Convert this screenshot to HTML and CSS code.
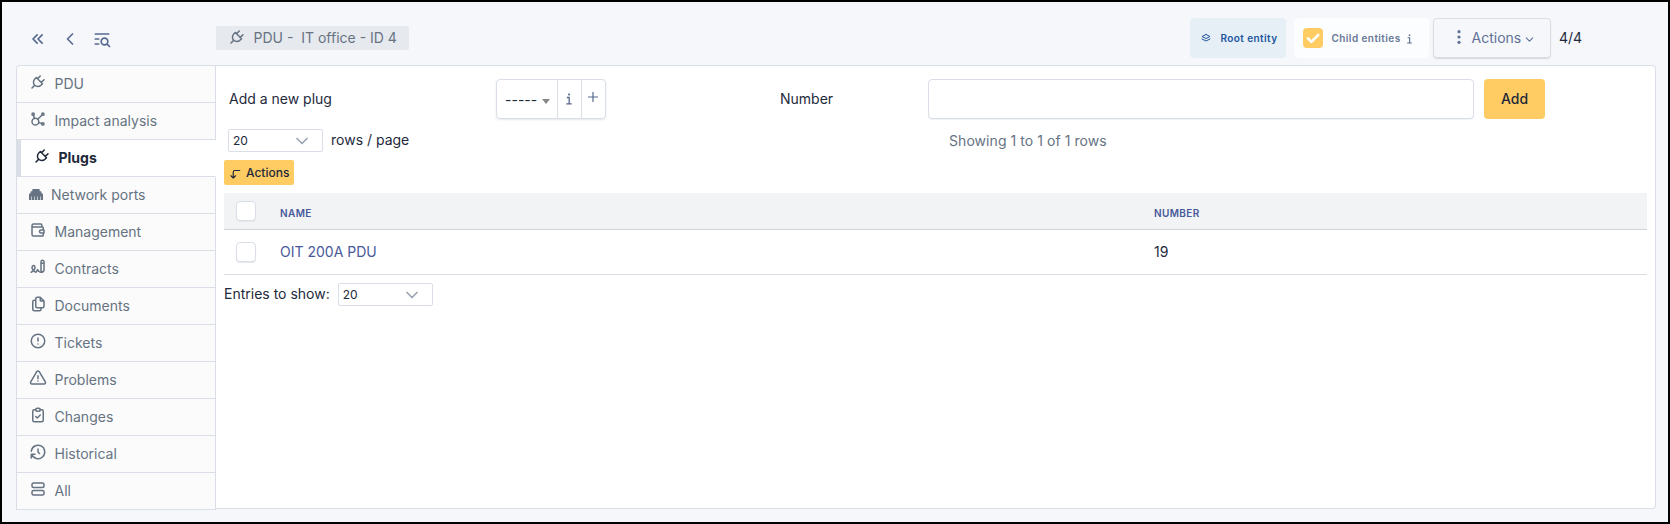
FILE: index.html
```html
<!DOCTYPE html>
<html lang="en">
<head>
<meta charset="utf-8">
<title>PDU - IT office - ID 4</title>
<link rel="stylesheet" href="styles.css">
</head>
<body>
<svg class="defs" width="0" height="0">
  <symbol id="plug" viewBox="0 0 24 24"><path d="M9.785 6l8.215 8.215l-2.054 2.054a5.81 5.81 0 1 1-8.215-8.215l2.054-2.054zM4 20l3.5-3.5M15 4l-3.5 3.5M20 9l-3.5 3.5"/></symbol>
  <symbol id="info" viewBox="0 0 6 12"><path d="M.8 4.5h2.4v6M.3 10.8h5.4" fill="none" stroke="currentColor" stroke-width="1.3"/><rect x="2.1" y=".6" width="1.8" height="1.8" fill="currentColor" stroke="none"/></symbol>
  <symbol id="down" viewBox="0 0 24 24"><path d="M6 9l6 6l6-6"/></symbol>
</svg>
<div class="page">
  <header class="topbar">
    <nav class="nav">
      <svg class="icon nav-icon"><path transform="scale(.8333)" d="M11 7l-5 5l5 5M17 7l-5 5l5 5"/></svg>
      <svg class="icon nav-icon"><path transform="scale(.8333)" d="M15 6l-6 6l6 6"/></svg>
      <svg class="icon nav-icon"><g transform="scale(.8333)"><circle cx="15" cy="15" r="4"/><path d="M18.5 18.5l2.5 2.5M4 6h16M4 12h4M4 18h4"/></g></svg>
    </nav>
    <h1 class="title"><svg class="icon"><use href="#plug"/></svg><span>PDU -&nbsp; IT office - ID 4</span></h1>
    <div class="tools">
      <div class="entity"><svg class="icon" viewBox="0 0 24 24"><path d="M12 5l-8 4l8 4l8-4l-8-4M4 14l8 4l8-4"/></svg><span>Root entity</span></div>
      <div class="children"><span class="checked"><svg viewBox="0 0 20 20"><path d="M5 10.5l3.4 3.3l6.8-6.8"/></svg></span><span>Child entities</span><svg class="info"><use href="#info"/></svg></div>
      <div class="menu"><svg class="dots" viewBox="0 0 4 14"><circle cx="2" cy="1.7" r="1.6"/><circle cx="2" cy="7" r="1.6"/><circle cx="2" cy="12.3" r="1.6"/></svg><span>Actions</span><svg class="icon caret"><use href="#down"/></svg></div>
      <span class="pager">4/4</span>
    </div>
  </header>
  <div class="body">
    <ul class="tabs">
      <li class="tab"><svg class="icon"><use href="#plug"/></svg><span>PDU</span></li>
      <li class="tab"><svg class="icon" viewBox="0 0 24 24"><path d="M5.931 6.936l1.275 4.249m5.607 5.609l4.251 1.275M11.683 12.317l5.759-5.759"/><circle cx="5.5" cy="5.5" r="1.5"/><circle cx="18.5" cy="5.5" r="1.5"/><circle cx="18.5" cy="18.5" r="1.5"/><circle cx="8.5" cy="15.5" r="4.5"/></svg><span>Impact analysis</span></li>
      <li class="tab active"><svg class="icon"><use href="#plug"/></svg><span>Plugs</span></li>
      <li class="tab ports"><svg class="solid" viewBox="0 0 14 11"><path d="M0 11V5.2Q0 4.6.6 4.6H1.5V2.8Q1.5 2.2 2.1 2.2H3.3V.6Q3.3 0 3.9 0H10.1Q10.7 0 10.7 .6V2.2H11.9Q12.5 2.2 12.5 2.8V4.6H13.4Q14 4.6 14 5.2V11H11.6V7.5H11V11H8.7V7.5H8.1V11H5.9V7.5H5.3V11H3V7.5H2.4V11z"/></svg><span>Network ports</span></li>
      <li class="tab"><svg class="icon" viewBox="0 0 24 24"><path d="M17 8v-3a1 1 0 0 0-1-1h-10a2 2 0 0 0 0 4h12a1 1 0 0 1 1 1v3m0 4v3a1 1 0 0 1-1 1h-12a2 2 0 0 1-2-2v-12M20 12v4h-4a2 2 0 0 1 0-4h4"/></svg><span>Management</span></li>
      <li class="tab"><svg class="icon" viewBox="0 0 24 24"><path d="M3 19c3.333-2 5-4 5-6c0-3-1-3-2-3s-2.032 1.085-2 3c.034 2.048 1.658 2.877 2.5 4c1.5 2 2.5 2.5 3.5 1c.667-1 1.167-1.833 1.5-2.5c1 2.333 2.333 3.5 4 3.5h2.5M20 17v-12c0-1.121-.879-2-2-2s-2 .879-2 2v12l2 2l2-2zM16 7h4"/></svg><span>Contracts</span></li>
      <li class="tab"><svg class="icon" viewBox="0 0 24 24"><path d="M15 3v4a1 1 0 0 0 1 1h4M18 17h-7a2 2 0 0 1-2-2v-10a2 2 0 0 1 2-2h4l5 5v7a2 2 0 0 1-2 2zM16 17v2a2 2 0 0 1-2 2h-7a2 2 0 0 1-2-2v-10a2 2 0 0 1 2-2h2"/></svg><span>Documents</span></li>
      <li class="tab"><svg class="icon" viewBox="0 0 24 24"><circle cx="12" cy="12" r="9"/><path d="M12 8v4M12 16h.01"/></svg><span>Tickets</span></li>
      <li class="tab"><svg class="icon" viewBox="0 0 24 24"><path d="M12 9v4M12 16h.01M10.363 3.591l-8.106 13.534a1.914 1.914 0 0 0 1.636 2.871h16.214a1.914 1.914 0 0 0 1.636-2.87l-8.106-13.536a1.914 1.914 0 0 0-3.274 0z"/></svg><span>Problems</span></li>
      <li class="tab"><svg class="icon" viewBox="0 0 24 24"><path d="M9 5h-2a2 2 0 0 0-2 2v12a2 2 0 0 0 2 2h10a2 2 0 0 0 2-2v-12a2 2 0 0 0-2-2h-2M9 14l2 2l4-4"/><rect x="9" y="3" width="6" height="4" rx="2"/></svg><span>Changes</span></li>
      <li class="tab"><svg class="icon" viewBox="0 0 24 24"><path d="M12 8v4l2 2M3.05 11a9 9 0 1 1 .5 4m-.5 5v-5h5"/></svg><span>Historical</span></li>
      <li class="tab"><svg class="icon" viewBox="0 0 24 24"><rect x="4" y="4" width="16" height="6" rx="2"/><rect x="4" y="14" width="16" height="6" rx="2"/></svg><span>All</span></li>
    </ul>
    <main class="panel">
      <div class="form">
        <label class="label-plug">Add a new plug</label>
        <div class="group"><span class="drop">-----<i class="arrow"></i></span><span class="addon"><svg class="info"><use href="#info"/></svg></span><span class="addon"><svg class="plus" viewBox="0 0 10 10"><path d="M5 0v10M0 5h10"/></svg></span></div>
        <label class="label-number">Number</label>
        <input class="number" type="text">
        <button class="add">Add</button>
      </div>
      <div class="paging">
        <span class="select">20<svg class="icon"><use href="#down"/></svg></span><span class="rows">rows / page</span><span class="showing">Showing 1 to 1 of 1 rows</span>
      </div>
      <button class="mass"><svg class="icon" viewBox="0 0 24 24"><path d="M20 6h-8a3 3 0 0 0-3 3v10l-4-4m8 0l-4 4"/></svg>Actions</button>
      <table class="grid">
        <thead><tr><th class="c-check"><i class="box"></i></th><th class="c-name">Name</th><th>Number</th></tr></thead>
        <tbody><tr><td><i class="box"></i></td><td class="link">OIT 200A PDU</td><td>19</td></tr></tbody>
      </table>
      <div class="entries"><span>Entries to show:</span><span class="select">20<svg class="icon"><use href="#down"/></svg></span></div>
    </main>
  </div>
</div>
</body>
</html>
```
FILE: styles.css
```css
* { box-sizing: border-box; }
body { margin: 0; font: 14px/20px Inter, "Liberation Sans", sans-serif; color: #1e293b; }
.defs { display: block; }
.page { height: 524px; border: 2px solid #000; background: #f5f7fb; padding: 0 12px 0 14px; overflow: hidden; }
.icon { width: 18px; height: 18px; flex: none; fill: none; stroke: currentColor; stroke-width: 2; stroke-linecap: round; stroke-linejoin: round; }

.topbar { height: 63px; display: flex; }
.nav { width: 200px; display: flex; gap: 12px; padding: 27px 0 0 12px; color: #56698f; }
.nav-icon { width: 20px; height: 20px; }
.title { width: 193px; height: 24px; margin: 24px 0 0; padding-left: 12px; display: flex; align-items: center; background: #e6e9ee; border-radius: 2px; color: #667382; font-size: 14px; font-weight: 400; white-space: nowrap; }
.title .icon { margin: -2px 7.5px 0 0; }
.tools { margin-left: auto; padding: 16px 73px 0 0; display: flex; }
.entity, .children { height: 40px; border-radius: 4px; display: flex; align-items: center; font-size: 10px; font-weight: 600; letter-spacing: .42px; white-space: nowrap; }
.entity { width: 96px; padding-left: 10px; margin-right: 8px; background: #e6eff6; color: #2056a0; }
.entity .icon { width: 12px; height: 12px; margin-right: 8.5px; }
.children { width: 135px; padding-left: 9px; margin-right: 4px; background: #fcfdfe; color: #667796; }
.checked { width: 20px; height: 20px; margin-right: 8.5px; background: #fecc63; border-radius: 4px; }
.checked svg { display: block; fill: none; stroke: #fff; stroke-width: 2.6; stroke-linecap: round; stroke-linejoin: round; }
.info { width: 6px; height: 12px; color: #56698f; }
.children .info { width: 5px; height: 10px; margin: 1px 0 0 6.5px; }
.menu { width: 118px; height: 40px; padding-left: 23px; display: flex; align-items: center; border: 1px solid #d9dde4; border-radius: 4px; box-shadow: 0 1px 1px #d5d9df; color: #617196; }
.dots { width: 4px; height: 14px; margin: -3px 10.5px 0 0; fill: currentColor; }
.caret { width: 13px; height: 13px; margin: 2px 0 0 2px; }
.pager { width: 24px; margin-left: 8px; line-height: 40px; }

.body { display: flex; align-items: flex-start; }
.tabs { width: 200px; flex: none; list-style: none; margin: 0; padding: 0; border: 1px solid #d9dee7; border-width: 1px 0 0 1px; border-radius: 4px 0 0; overflow: hidden; }
.tab { height: 37px; padding: 0 0 0 12px; display: flex; align-items: center; background: #fbfbfb; border: 1px solid #d9dee7; border-width: 0 1px 1px 0; color: #667382; }
.tab .icon { margin: -4px 7.5px 0 0; }
.tab.active { border-left: 4px solid #d9dee7; border-right-color: #fff; background: #fff; color: #1e293b; font-weight: 700; }
.solid { width: 14px; height: 11px; margin: -1px 8px 0 0; fill: currentColor; }

.panel { flex: 1; height: 444px; padding: 13px 8px 0; border: 1px solid #d9dee7; border-left: 0; border-radius: 0 4px 4px 0; background: #fff; background-clip: padding-box; }
.form { height: 40px; display: flex; align-items: center; padding-left: 5px; }
.label-plug { width: 267px; }
.label-number { width: 148px; }
.group { width: 110px; height: 40px; margin-right: 174px; display: flex; border: 1px solid #d9dee7; border-radius: 4px; box-shadow: 0 1px 2px #e3e6eb; }
.drop { width: 61px; display: flex; align-items: center; padding: 1px 0 0 8px; }
.arrow { margin: 4px 0 0 5px; border: 4px solid transparent; border-top: 5px solid #888; border-bottom: 0; }
.addon { width: 24px; display: flex; align-items: center; justify-content: center; border-left: 1px solid #d9dee7; padding-right: 1px; }
.plus { width: 10px; height: 10px; margin-top: -4px; stroke: #56698f; stroke-width: 1.2; }
.number { width: 546px; height: 40px; border: 1px solid #d9dee7; border-radius: 4px; background: #fff; box-shadow: 0 1px 1px #f0f2f5; }
button { border: 0; padding: 0; font: inherit; color: #1e293b; background: #fecc63; }
.add { width: 61px; height: 40px; margin-left: 10px; border-radius: 4px; font-weight: 500; }
.paging { height: 33px; margin-top: 10px; padding-left: 4px; display: flex; align-items: flex-start; }
.select { width: 95px; height: 23px; padding: 0 10px 0 4px; display: flex; align-items: center; justify-content: space-between; border: 1px solid #d9dee7; border-radius: 2px; font-size: 12px; }
.select .icon { width: 20px; height: 20px; color: #9aa3b0; }
.rows { width: 618px; margin-left: 8px; line-height: 22px; }
.showing { color: #667382; line-height: 24px; letter-spacing: .06px; }
.mass { width: 70px; height: 25px; margin-top: -2px; display: flex; align-items: center; padding-left: 4px; border-radius: 2px; font-size: 12px; font-weight: 500; }
.mass .icon { width: 14px; height: 14px; margin: 3px 4px 0 0; }
.grid { width: 1423px; margin-top: 8px; border-collapse: separate; border-spacing: 0; table-layout: fixed; }
.grid th { height: 37px; padding: 4px 0 0; background: #f2f3f5; border-bottom: 1px solid #d0d5dd; text-align: left; font-size: 10px; line-height: 16px; font-weight: 600; letter-spacing: .4px; text-transform: uppercase; color: #47599a; }
.grid td { height: 45px; padding: 0; border-bottom: 1px solid #dadde4; }
.grid .c-check { width: 56px; padding: 0; }
.c-name { width: 874px; }
.grid .link { color: #47599a; }
.box { display: block; width: 20px; height: 20px; margin-left: 12px; border: 1px solid #d9dee7; border-radius: 4px; background: #fff; box-shadow: 0 1px 1px #e6e8ec; }
.entries { margin-top: 8px; display: flex; gap: 8px; line-height: 22px; }
```
